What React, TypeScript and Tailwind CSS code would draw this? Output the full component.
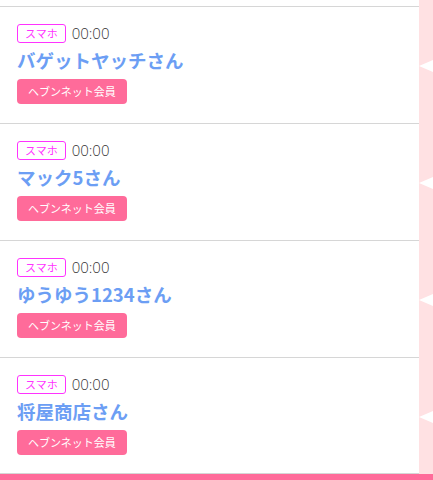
const rows = ['バゲットヤッチさん', 'マック5さん', 'ゆうゆう1234さん', '将屋商店さん'];

function Row({ name, last }: { name: string; last?: boolean }) {
  return (
    <div className="flex h-[117px]">
      <div
        className={`w-[419px] bg-white border-t border-[#d6d6d6] pl-[17px] pt-[17px] ${last ? 'border-b' : ''}`}
      >
        <div className="flex items-center gap-[6px] h-[19px]">
          <span className="h-[19px] px-[7px] border border-[#ff33ff] rounded-[3px] text-[11px] leading-[17px] text-[#ff33ff]">
            スマホ
          </span>
          <span
            className="text-[15px] font-light text-[#333333] leading-none"
            style={{ fontFamily: '"Open Sans", "Noto Sans", sans-serif' }}
          >
            00:00
          </span>
        </div>
        <div className="mt-[5px] text-[18.5px] font-bold leading-[24px] text-[#6c9ef4]">{name}</div>
        <div className="mt-[7px] inline-flex items-center h-[25px] px-[11px] rounded-[4px] bg-[#ff6b9a] text-white text-[11px]">
          ヘブンネット会員
        </div>
      </div>
      <div className="flex-1 bg-[#ffe1e3] flex items-center justify-end">
        <svg width="14" height="12" viewBox="0 0 14 12" className="mt-[2px]">
          <polygon points="0,6 14,0 14,12" fill="#ffffff" />
        </svg>
      </div>
    </div>
  );
}

export default function App() {
  return (
    <div
      className="w-[433px] h-[480px] overflow-hidden bg-white"
      style={{ fontFamily: '"Noto Sans CJK JP", "Noto Sans", sans-serif' }}
    >
      <div className="flex h-[6px]">
        <div className="w-[419px] bg-white" />
        <div className="flex-1 bg-[#ffe1e3]" />
      </div>
      {rows.map((n, i) => (
        <Row key={n} name={n} last={i === rows.length - 1} />
      ))}
      <div className="h-[10px] bg-[#ff6b9a]" />
    </div>
  );
}
